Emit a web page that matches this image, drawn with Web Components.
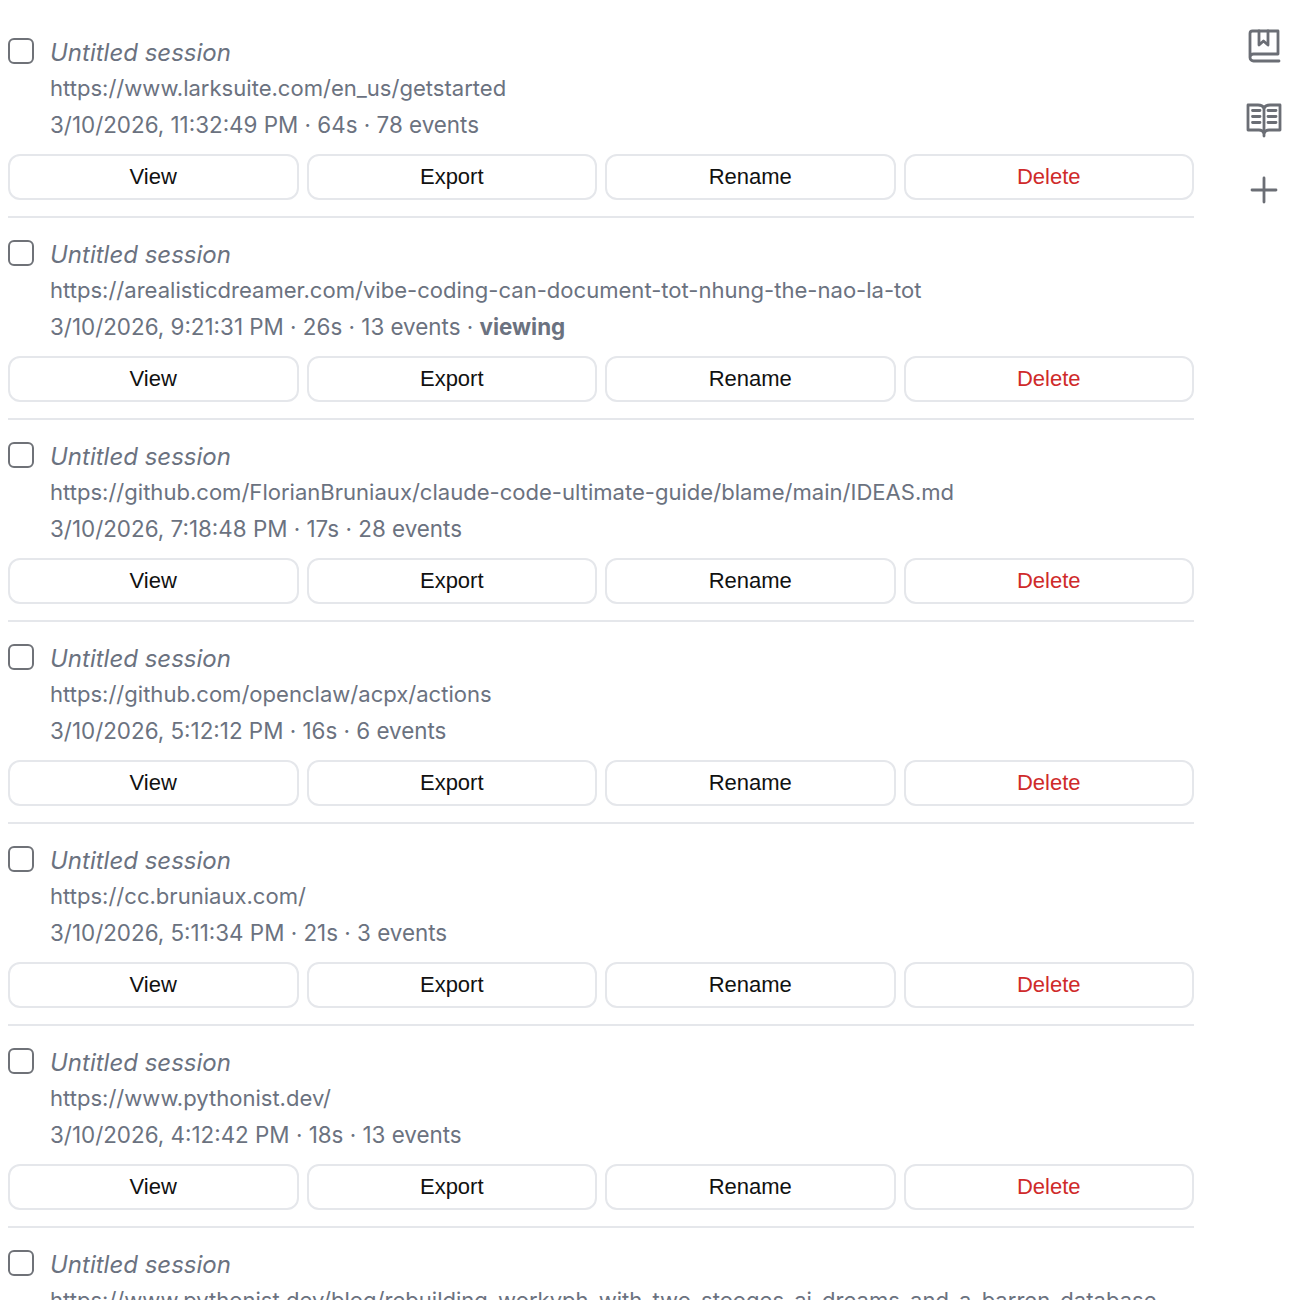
<!DOCTYPE html><html lang="en">
<head>
<meta charset="UTF-8">
<title>Sessions</title>
<style>
  html, body { margin: 0; background: #fff; }
  body { height: 1300px; overflow: hidden; font-family: Inter, "Liberation Sans", sans-serif; }
</style>
</head>
<body>
<session-app></session-app>
<script>
const SESSIONS = [
  { url: "https://www.larksuite.com/en_us/getstarted", meta: "3/10/2026, 11:32:49 PM · 64s · 78 events" },
  { url: "https://arealisticdreamer.com/vibe-coding-can-document-tot-nhung-the-nao-la-tot", meta: "3/10/2026, 9:21:31 PM · 26s · 13 events · ", viewing: true },
  { url: "https://github.com/FlorianBruniaux/claude-code-ultimate-guide/blame/main/IDEAS.md", meta: "3/10/2026, 7:18:48 PM · 17s · 28 events" },
  { url: "https://github.com/openclaw/acpx/actions", meta: "3/10/2026, 5:12:12 PM · 16s · 6 events" },
  { url: "https://cc.bruniaux.com/", meta: "3/10/2026, 5:11:34 PM · 21s · 3 events" },
  { url: "https://www.pythonist.dev/", meta: "3/10/2026, 4:12:42 PM · 18s · 13 events" },
  { url: "https://www.pythonist.dev/blog/rebuilding-workyph-with-two-stooges-ai-dreams-and-a-barren-database", meta: "" },
];

class SessionRow extends HTMLElement {
  constructor() {
    super();
    this.attachShadow({ mode: "open" });
  }
  connectedCallback() {
    const url = this.getAttribute("url");
    const meta = this.getAttribute("meta");
    this.shadowRoot.innerHTML = `
      <style>
        :host { display: block; box-sizing: border-box; height: 202px; padding-top: 22px; border-bottom: 2px solid #e5e7eb; }
        .top { display: flex; gap: 16px; align-items: flex-start; }
        .check { width: 26px; height: 26px; box-sizing: border-box; flex: none;
                 border: 2px solid #6f7278; border-radius: 6px; background: #fff; }
        .text { min-width: 0; color: #6b7280; }
        .title { font-style: italic; font-size: 24px; line-height: 30px; margin-bottom: 2px; }
        .line { white-space: nowrap; }
        .url { font-size: 22.05px; line-height: 36px; }
        .meta { font-size: 22.4px; line-height: 38px; }
        b { font-weight: 700; }
        .actions { display: flex; gap: 8px; margin-top: 10px; }
      </style>
      <div class="top">
        <div class="check"></div>
        <div class="text">
          <div class="title">Untitled session</div>
          <div class="line url">${url}</div>
          <div class="line meta">${meta}${this.hasAttribute("viewing") ? "<b>viewing</b>" : ""}</div>
        </div>
      </div>
      <div class="actions">
        <session-button>View</session-button>
        <session-button>Export</session-button>
        <session-button>Rename</session-button>
        <session-button danger>Delete</session-button>
      </div>`;
  }
}

class SessionButton extends HTMLElement {
  constructor() {
    super();
    this.attachShadow({ mode: "open" });
    this.shadowRoot.innerHTML = `
      <style>
        :host { display: flex; flex: 1; align-items: center; justify-content: center; box-sizing: border-box;
                height: 46px; border: 2px solid #e5e7eb; border-radius: 12px; background: #fff;
                font-family: "Liberation Sans", sans-serif; font-size: 22px; color: #111; }
        :host([danger]) { color: #cf2a2a; }
      </style>
      <slot></slot>`;
  }
}

class SideBar extends HTMLElement {
  constructor() {
    super();
    this.attachShadow({ mode: "open" });
    this.shadowRoot.innerHTML = `
      <style>
        :host { display: flex; flex-direction: column; align-items: center; gap: 24px; width: 48px; padding-top: 22px; }
        svg { display: block; width: 48px; height: 48px; fill: none; stroke: #6b6e75; stroke-width: 2.8; stroke-linecap: round; stroke-linejoin: round; }
      </style>
      <svg viewBox="0 0 48 48"><path d="M10 35.500V11.500a2.500 2.500 0 0 1 2.500-2.500H38v23H13.500a3.500 3.500 0 0 0-3.500 3.500 3.500 3.500 0 0 0 3.500 3.500H39"/><path d="M19 9v14l4.500-4 4.500 4V9"/></svg>
      <svg viewBox="0 0 48 48"><path d="M8 11h10c3 0 5 1 6 3 1-2 3-3 6-3h10v25H29c-2 0-4 1-5 3-1-2-3-3-5-3H8z"/><path d="M24 14v28"/><path d="M12.500 16.500h7.500M12.500 22.500h7.500M12.500 28.500h7.500M28 16.500h8M28 22.500h8M28 28.500h8"/></svg>
      <svg viewBox="0 0 48 48"><path d="M24 12v24M12 24h24"/></svg>`;
  }
}

class SessionApp extends HTMLElement {
  constructor() {
    super();
    this.attachShadow({ mode: "open" });
    this.shadowRoot.innerHTML = `
      <style>
        :host { display: flex; align-items: flex-start; }
        main { width: 1186px; margin-left: 8px; padding-top: 16px; flex: none; }
        side-bar { margin-left: 46px; }
      </style>
      <main></main>
      <side-bar></side-bar>`;
    const main = this.shadowRoot.querySelector("main");
    SESSIONS.forEach(s => {
      const row = document.createElement("session-row");
      row.setAttribute("url", s.url);
      row.setAttribute("meta", s.meta);
      if (s.viewing) row.setAttribute("viewing", "");
      main.appendChild(row);
    });
  }
}

customElements.define("session-button", SessionButton);
customElements.define("session-row", SessionRow);
customElements.define("side-bar", SideBar);
customElements.define("session-app", SessionApp);
</script>
</body>
</html>
